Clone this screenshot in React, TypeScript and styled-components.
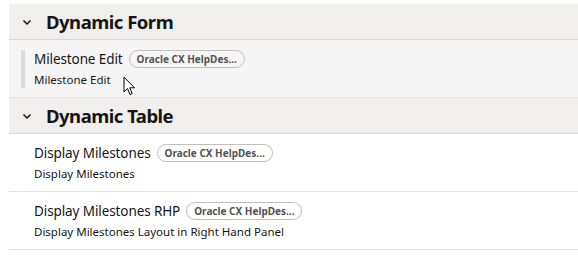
import React from "react";
import styled, { createGlobalStyle } from "styled-components";

const Global = createGlobalStyle`
  html, body { margin: 0; padding: 0; background: #fff; }
  body { font-family: "Noto Sans", "Open Sans", sans-serif; color: #161513; }
`;

const Page = styled.div`
  padding: 4px 0 0 9px;
  position: relative;
`;

const SectionHeader = styled.div`
  display: flex;
  align-items: center;
  height: 35px;
  background: #f0efed;
  border-bottom: 1px solid #d9d7d4;
  padding-left: 12px;
  gap: 13px;
`;

const Chevron = styled.svg`
  width: 12px;
  height: 12px;
  flex: none;
`;

const SectionTitle = styled.h2`
  margin: 0;
  font-size: 18.5px;
  font-weight: 700;
  letter-spacing: -0.5px;
  color: #161513;
`;

const Row = styled.div<{ $active?: boolean }>`
  display: flex;
  height: 57px;
  background: ${(p) => (p.$active ? "#f5f5f5" : "#fff")};
  border-bottom: 1px solid #e4e2e0;
  align-items: center;
  padding-left: 12px;
`;

const Bar = styled.div<{ $show?: boolean }>`
  width: 4px;
  height: 38px;
  background: ${(p) => (p.$show ? "#dcdbd9" : "transparent")};
  margin-right: 9px;
  flex: none;
`;

const RowBody = styled.div`
  display: flex;
  flex-direction: column;
  gap: 4px;
`;

const TitleLine = styled.div`
  display: flex;
  align-items: center;
  gap: 6px;
`;

const RowTitle = styled.span`
  font-size: 13.5px;
  letter-spacing: -0.1px;
  color: #161513;
`;

const Badge = styled.span`
  display: inline-flex;
  align-items: center;
  height: 16px;
  padding: 0 7px;
  border: 1px solid #c2beb9;
  border-radius: 9px;
  font-size: 10px;
  font-weight: 700;
  color: #555250;
`;

const Subtitle = styled.span`
  font-size: 11.5px;
  color: #161513;
`;

const Cursor = styled.svg`
  position: absolute;
  left: 123px;
  top: 76px;
  width: 13px;
  height: 20px;
`;

const ChevronIcon = () => (
  <Chevron viewBox="0 0 12 12">
    <path d="M2.5 4.5 L6 8 L9.5 4.5" fill="none" stroke="#161513" strokeWidth="1.5" />
  </Chevron>
);

type Item = { title: string; sub: string; active?: boolean };

const ItemRow = ({ title, sub, active }: Item) => (
  <Row $active={active}>
    <Bar $show={active} />
    <RowBody>
      <TitleLine>
        <RowTitle>{title}</RowTitle>
        <Badge>Oracle CX HelpDes...</Badge>
      </TitleLine>
      <Subtitle>{sub}</Subtitle>
    </RowBody>
  </Row>
);

export default function App() {
  return (
    <>
      <Global />
      <Page>
        <SectionHeader>
          <ChevronIcon />
          <SectionTitle>Dynamic Form</SectionTitle>
        </SectionHeader>
        <ItemRow title="Milestone Edit" sub="Milestone Edit" active />
        <SectionHeader>
          <ChevronIcon />
          <SectionTitle>Dynamic Table</SectionTitle>
        </SectionHeader>
        <ItemRow title="Display Milestones" sub="Display Milestones" />
        <ItemRow title="Display Milestones RHP" sub="Display Milestones Layout in Right Hand Panel" />
        <Cursor viewBox="0 0 13 20">
          <path d="M1 1 L1 16 L4.5 12.5 L7 18.5 L9.2 17.6 L6.8 11.8 L11.5 11.8 Z" fill="#fff" stroke="#000" strokeWidth="1" strokeLinejoin="round" />
        </Cursor>
      </Page>
    </>
  );
}
